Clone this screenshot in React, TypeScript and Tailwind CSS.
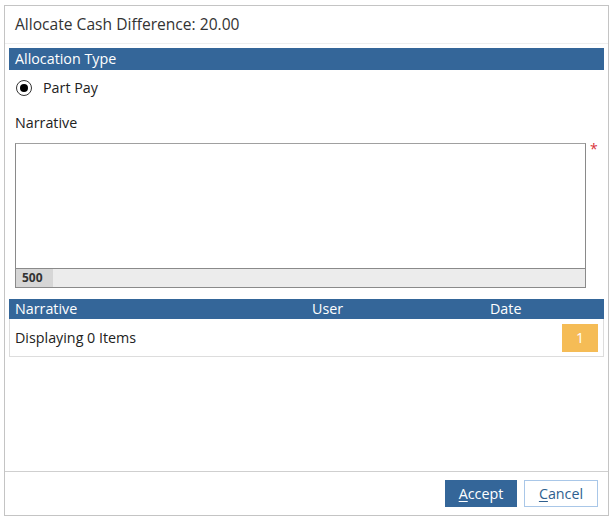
import React from "react";

export default function App() {
  return (
    <div className="w-[612px] h-[519px] bg-white pt-[5px] pl-[4px]" style={{ fontFamily: '"Open Sans", "Noto Sans", sans-serif' }}>
      <div className="w-[605px] h-[511px] border border-[#c4c4c4] flex flex-col text-[#222]">
        {/* Title */}
        <div className="h-[38px] border-b border-[#eeeeee] flex items-center px-[10px] text-[15.6px] text-[#333]">
          Allocate Cash Difference: 20.00
        </div>

        <div className="flex-1 flex flex-col px-[4px] pt-[4px]">
          {/* Allocation type */}
          <div className="h-[22px] bg-[#346699] text-white text-[14.3px] flex items-center px-[6px]">Allocation Type</div>
          <div className="h-[36px] flex items-center pl-[7px] gap-[11px] text-[14.3px]">
            <span className="w-[16px] h-[16px] rounded-full border border-[#333] flex items-center justify-center">
              <span className="w-[8px] h-[8px] rounded-full bg-black" />
            </span>
            <span>Part Pay</span>
          </div>

          <div className="h-[34px] flex items-center pl-[6px] text-[14.3px]">Narrative</div>

          {/* Narrative textarea */}
          <div className="mt-[3px] flex items-start pl-[6px]">
            <div className="w-[571px] h-[145px] border border-[#8a8a8a] border-t-[#a0a0a0] flex flex-col bg-white">
              <div className="flex-1" />
              <div className="h-[19px] border-t border-[#8a8a8a] bg-[#ececec] flex">
                <span className="w-[37px] bg-[#d6d6d6] text-[12px] font-bold text-[#333] flex items-center pl-[6px]">500</span>
              </div>
            </div>
            <span className="ml-[4px] mt-[-1px] text-[#d9343a] text-[14px] leading-none">*</span>
          </div>

          {/* Grid */}
          <div className="mt-[11px] h-[20px] bg-[#346699] text-white text-[14.3px] flex items-center">
            <span className="w-[303px] pl-[6px]">Narrative</span>
            <span className="w-[178px]">User</span>
            <span>Date</span>
          </div>
          <div className="h-[38px] border-x border-b border-[#dddddd] flex items-center justify-between pl-[5px] pr-[5px] text-[14.3px]">
            <span>Displaying 0 Items</span>
            <span className="w-[36px] h-[28px] bg-[#f5bc56] text-white text-[14px] flex items-center justify-center">1</span>
          </div>
          <div className="flex-1" />
        </div>

        {/* Footer */}
        <div className="h-[44px] border-t border-[#cfcfcf] flex items-center justify-end gap-[7px] pr-[10px]">
          <button className="w-[72px] h-[27px] bg-[#346699] text-white text-[14.3px]">
            <span className="underline underline-offset-2">A</span>ccept
          </button>
          <button className="w-[74px] h-[27px] border border-[#a9c7e8] bg-white text-[#2f5f8f] text-[14.3px]">
            <span className="underline underline-offset-2">C</span>ancel
          </button>
        </div>
      </div>
    </div>
  );
}
